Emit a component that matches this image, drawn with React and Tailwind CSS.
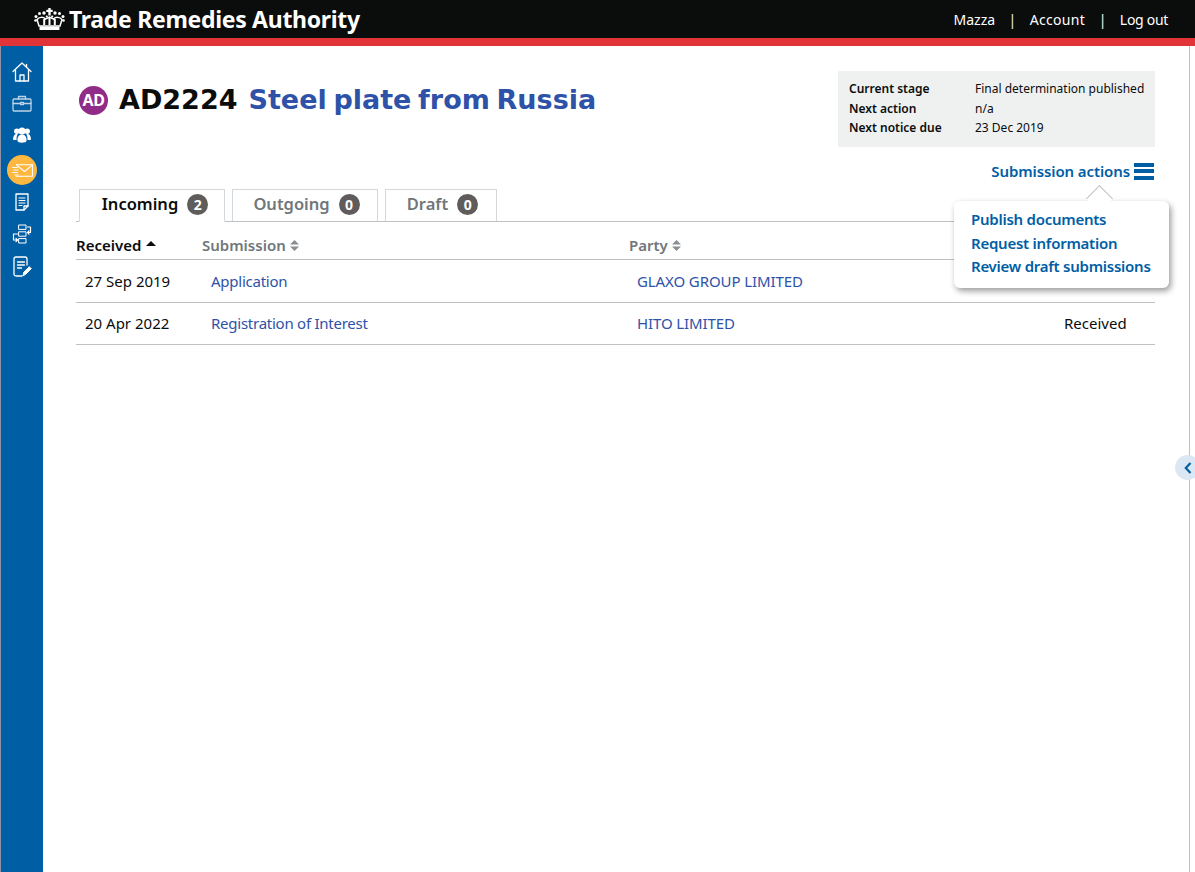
import React from "react";

const F = "font-['Noto_Sans',sans-serif]";

function Crown() {
  return (
    <svg width="31" height="22" viewBox="0 0 31 22" fill="#fff">
      <rect x="14.300" y="0" width="2.400" height="7.500" />
      <rect x="12.300" y="1.800" width="6.400" height="2.200" />
      <circle cx="10" cy="5" r="1.700" /><circle cx="21" cy="5" r="1.700" />
      <circle cx="5.500" cy="5.500" r="1.500" /><circle cx="25.500" cy="5.500" r="1.500" />
      <circle cx="2" cy="8.500" r="1.500" /><circle cx="29" cy="8.500" r="1.500" />
      <circle cx="12.800" cy="8.500" r="1.100" /><circle cx="18.200" cy="8.500" r="1.100" />
      <circle cx="1.500" cy="12.500" r="1.300" /><circle cx="29.500" cy="12.500" r="1.300" />
      <path d="M3 11.500C5 9 9 8.500 11.500 11L15.500 9l4 2c2.500-2.500 6.500-2 8.500 .5L26 18H5z" fill="none" stroke="#fff" strokeWidth="1.500" />
      <rect x="9.200" y="11" width="2" height="6" /><rect x="14.500" y="10" width="2" height="7" /><rect x="19.800" y="11" width="2" height="6" />
      <rect x="5.500" y="18.500" width="20" height="3.500" rx="0.500" />
    </svg>
  );
}

const stroke = { fill: "none", stroke: "#fff", strokeWidth: 1.300, strokeLinejoin: "round", strokeLinecap: "round" };

function Home() {
  return (
    <svg width="20" height="20" viewBox="0 0 20 20" {...stroke}>
      <path d="M1 9.500 10 1l9 8.500" />
      <path d="M14.500 2.500v2.500" />
      <path d="M3.500 8v11h13V8" />
      <path d="M8 19v-6h4v6" />
    </svg>
  );
}
function Brief() {
  return (
    <svg width="20" height="17" viewBox="0 0 20 17" {...stroke} stroke="#bcd3e6">
      <rect x="1" y="4" width="18" height="12" rx="1" />
      <path d="M6.500 4V1.500h7V4" />
      <path d="M1 8.500h7M12 8.500h7" />
      <rect x="8.500" y="7.500" width="3" height="2" />
    </svg>
  );
}
function People() {
  return (
    <svg width="18" height="16" viewBox="0 0 18 16" fill="#fff">
      <circle cx="3.800" cy="4.300" r="2.700" /><circle cx="14.200" cy="4.300" r="2.700" /><circle cx="9" cy="4" r="3.600" />
      <path d="M0 12.500c0-3.500 1.500-5.500 3.500-5.500h1.300C3.800 8.400 3.500 10.500 3.500 13 1.500 13 0 12.900 0 12.500z" />
      <path d="M18 12.500c0-3.500-1.500-5.500-3.500-5.500h-1.300c1 1.400 1.300 3.500 1.300 6 2 0 3.500-.1 3.500-.5z" />
      <path d="M4.400 13.500c0-4 1.800-6 4.600-6s4.600 2 4.600 6c0 3-9.200 3-9.200 0z" />
    </svg>
  );
}
function Mail() {
  return (
    <svg width="21" height="13" viewBox="0 0 21 13" {...stroke} strokeWidth="1.100">
      <path d="M4.500 .8h16v11.400H4" />
      <path d="M4.500 .8l8 6.700 8-6.700" />
      <path d="M.6 3.500h5M2 6h4M.6 8.500h5M3 11h3" strokeWidth="1" />
    </svg>
  );
}
function Doc() {
  return (
    <svg width="14" height="18" viewBox="0 0 14 18" {...stroke}>
      <path d="M1 1h12v12l-4 4H1z" />
      <path d="M9 17v-4h4" />
      <path d="M4 5h6M4 7.500h6M4 10h6M4 12.500h3" strokeWidth="1" />
    </svg>
  );
}
function Flow() {
  return (
    <svg width="20" height="20" viewBox="0 0 20 20" {...stroke} strokeWidth="1">
      <rect x="7" y="1" width="7" height="4.400" />
      <rect x="7" y="7.800" width="7" height="4.400" />
      <rect x="7" y="14.600" width="7" height="4.400" />
      <path d="M15.500 3h3v5.500h-3M17 7l-1.500 1.500L17 10" strokeWidth="1.200" />
      <path d="M5.500 10h-4v6h4M4 14.500 5.500 16 4 17.500" strokeWidth="1.200" />
    </svg>
  );
}
function Edit() {
  return (
    <svg width="19" height="21" viewBox="0 0 19 21" {...stroke}>
      <path d="M9 20H3a2 2 0 0 1-2-2V3a2 2 0 0 1 2-2h9a2 2 0 0 1 2 2v6" />
      <path d="M4.500 6h7M4.500 9h7M4.500 12h4" />
      <path d="M10 19.500l.8-3.300 5.500-5.500 2 2-5.500 5.500z" fill="#fff" strokeWidth="1" />
    </svg>
  );
}

function Sort() {
  return (
    <svg width="9" height="11" viewBox="0 0 9 11" fill="#8a8e91" className="ml-[4px]">
      <path d="M4.500 0 9 4.500H0zM4.500 11 0 6.500h9z" />
    </svg>
  );
}

function Tab({ label, count, active, w }) {
  return (
    <div
      className={`${w} flex items-center justify-center gap-[9px] pb-[2px] border border-[#d5d8da] bg-white text-[16.500px] font-semibold ${
        active ? "h-[33px] pl-[6px] border-b-white text-[#0b0c0c] relative z-10 mb-[-1px]" : "h-[32px] pl-[3px] border-b-0 text-[#6f777b]"
      }`}
    >
      <span>{label}</span>
      <span className="w-[21px] h-[21px] rounded-full bg-[#605c5c] text-white text-[14px] font-bold flex items-center justify-center">
        {count}
      </span>
    </div>
  );
}

function Row({ date, sub, party, status }) {
  return (
    <div className="grid grid-cols-[126px_427px_1fr_91px] h-[42.500px] items-center border-b border-[#bfc1c3] text-[15px] text-[#0b0c0c]">
      <div className="pl-[9px]">{date}</div>
      <div className="pl-[9px] text-[#2e52a8] tracking-[-0.25px]">{sub}</div>
      <div className="pl-[8px] text-[#2e52a8] tracking-[-0.1px]">{party}</div>
      <div>{status}</div>
    </div>
  );
}

export default function App() {
  return (
    <div className={`${F} w-[1195px] h-[872px] overflow-hidden flex flex-col bg-white`}>
      <header className="h-[46px] shrink-0 bg-[#0b0c0c] border-b-[8px] border-[#e13438] flex items-center pl-[34px] pr-[27px] text-white">
        <Crown />
        <span className="ml-[4px] text-[23px] font-bold leading-none tracking-[-0.3px]">Trade Remedies Authority</span>
        <nav className="ml-auto flex items-center text-[14px]">
          <span>Mazza</span>
          <span className="mx-[13.500px] text-[#f3f2f1]">|</span>
          <span className="tracking-[0.3px]">Account</span>
          <span className="mx-[13.500px] text-[#f3f2f1]">|</span>
          <span className="tracking-[-0.3px]">Log out</span>
        </nav>
      </header>
      <div className="flex-1 flex min-h-0 border-l border-l-[#8f93a8]">
        <aside className="w-[42px] shrink-0 bg-[#005ea5] flex flex-col items-center pt-[16px]">
          <div className="h-[20px] flex items-center"><Home /></div>
          <div className="h-[17px] mt-[13px] flex items-center"><Brief /></div>
          <div className="h-[16px] mt-[15px] flex items-center"><People /></div>
          <div className="w-[30px] h-[30px] mt-[12px] rounded-full bg-[#ffb83f] flex items-center justify-center"><Mail /></div>
          <div className="h-[18px] mt-[8px] flex items-center"><Doc /></div>
          <div className="h-[20px] mt-[13px] flex items-center"><Flow /></div>
          <div className="h-[21px] mt-[12px] flex items-center"><Edit /></div>
        </aside>
        <div className="flex-1 relative border-r border-[#bfc1c3] mr-[5px]">
          <main className="pl-[33px] pr-[34px] pt-[25px]">
            <div className="flex items-start justify-between">
              <h1 className="flex items-center pl-[3px] pt-[12px] font-['DejaVu_Sans',sans-serif] font-bold text-[27px] leading-[34px] [word-spacing:-2.700px]">
                <span className={`${F} w-[29px] h-[29px] rounded-full bg-[#912b88] text-white text-[16px] tracking-[-0.5px] font-bold flex items-center justify-center`}>AD</span>
                <span className="ml-[11px] text-[#0b0c0c]">AD2224</span>
                <span className="ml-[11px] text-[#2e52a8]">Steel plate from Russia</span>
              </h1>
              <div className="w-[317px] h-[76px] bg-[#eff1f1] pl-[11px] pt-[8px] text-[12px] leading-[19.500px] text-[#0b0c0c]">
                <div className="flex"><span className="w-[126px] font-semibold">Current stage</span><span>Final determination published</span></div>
                <div className="flex"><span className="w-[126px] font-semibold">Next action</span><span>n/a</span></div>
                <div className="flex"><span className="w-[126px] font-semibold">Next notice due</span><span>23 Dec 2019</span></div>
              </div>
            </div>
            <div className="flex justify-end items-center h-[20px] mt-[14px] text-[#005ea5] text-[15px] font-semibold tracking-[-0.1px]">
              <span>Submission actions</span>
              <span className="ml-[4px] mr-[1px] w-[20px] flex flex-col gap-[2.500px]">
                <span className="h-[4px] bg-[#005ea5]" /><span className="h-[4px] bg-[#005ea5]" /><span className="h-[4px] bg-[#005ea5]" />
              </span>
            </div>
            <div className="mt-[8px] h-[32px] flex items-end gap-[7px] pl-[3px] border-b border-[#bfc1c3] box-content">
              <Tab label="Incoming" count="2" active w="w-[146px]" />
              <Tab label="Outgoing" count="0" w="w-[146px]" />
              <Tab label="Draft" count="0" w="w-[112px]" />
            </div>
            <div className="grid grid-cols-[126px_427px_1fr] h-[38px] pt-[10px] items-center border-b border-[#bfc1c3] text-[15px] font-semibold text-[#6f777b]">
              <div className="flex items-center text-[#0b0c0c]">Received
                <svg width="10" height="5" viewBox="0 0 10 5" fill="#0b0c0c" className="ml-[5px] mb-[5px]"><path d="M5 0l5 5H0z" /></svg>
              </div>
              <div className="flex items-center">Submission<Sort /></div>
              <div className="flex items-center">Party<Sort /></div>
            </div>
            <Row date="27 Sep 2019" sub="Application" party="GLAXO GROUP LIMITED" status="" />
            <Row date="20 Apr 2022" sub="Registration of Interest" party="HITO LIMITED" status="Received" />
          </main>
          <div className="absolute left-[911px] top-[155px] w-[215px] h-[87px] bg-white rounded-[6px] shadow-[2px_3px_6px_rgba(0,0,0,0.4)] pl-[17px] pt-[7px] text-[#005ea5] text-[15px] font-semibold leading-[23.500px] tracking-[-0.25px] z-20">
            <div className="absolute left-[136px] top-[-12px] w-[19px] h-[19px] rotate-45 bg-white border-l border-t border-[#bfc1c3]" />
            <div className="relative">Publish documents</div>
            <div className="relative">Request information</div>
            <div className="relative">Review draft submissions</div>
          </div>
          <div className="absolute left-[1132px] top-[409px] w-[25px] h-[25px] rounded-full bg-[#dbe8f3] flex items-center justify-center">
            <svg width="8" height="12" viewBox="0 0 8 12" fill="none" stroke="#005ea5" strokeWidth="2.200"><path d="M6.500 1 1.800 6l4.700 5" /></svg>
          </div>
        </div>
      </div>
    </div>
  );
}
